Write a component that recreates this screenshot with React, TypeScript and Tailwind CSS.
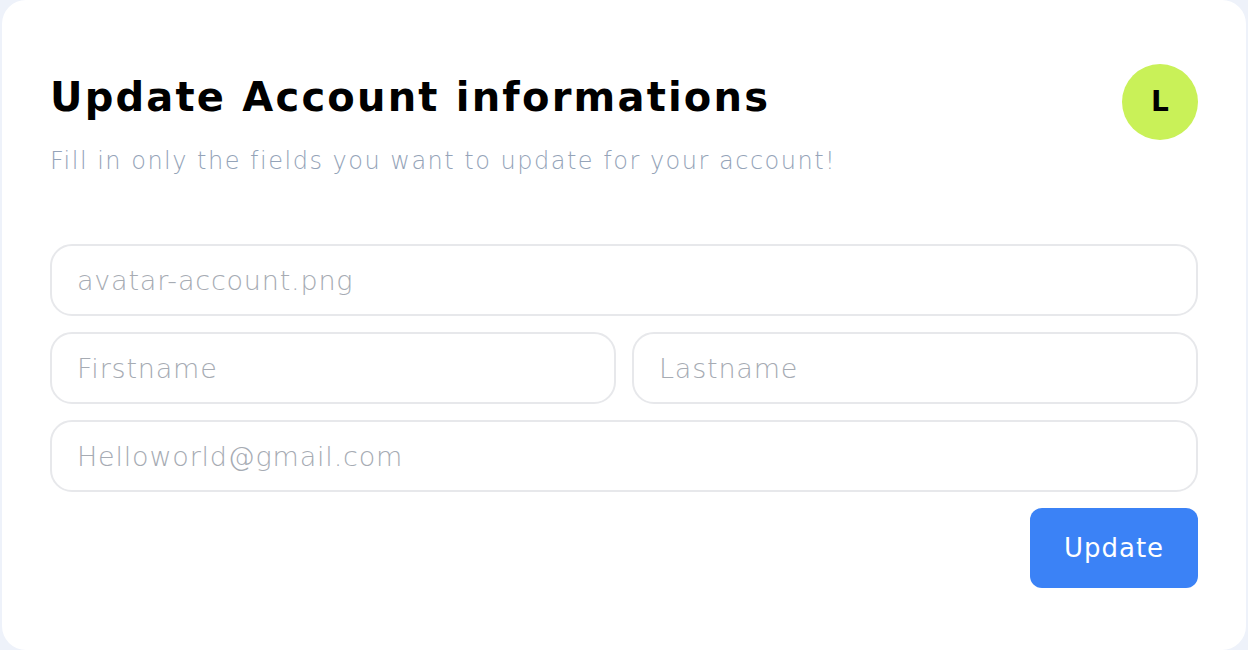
import React from "react";

export default function App() {
  const font = { fontFamily: '"DejaVu Sans", "Open Sans", sans-serif' };
  const inputCls =
    "h-[72px] rounded-[22px] border-2 border-[#e7e8eb] px-[25px] text-[27px] font-light tracking-[0.8px] text-gray-700 outline-none placeholder:text-[#a6abb3]";
  return (
    <div className="min-h-[650px] w-full bg-[#eef2fa] px-[2px]" style={font}>
      <div className="flex h-[650px] flex-col rounded-[24px] bg-white px-[48px] pt-[64px]">
        <div className="flex items-start justify-between">
          <div className="flex flex-col pt-[7px]">
            <h1 className="text-[40px] font-bold leading-[52px] tracking-[2.2px] text-black">
              Update Account informations
            </h1>
            <p className="mt-[22px] text-[24px] font-light leading-[32px] tracking-[1.5px] text-[#94a3b8]">
              Fill in only the fields you want to update for your account!
            </p>
          </div>
          <div className="flex h-[76px] w-[76px] items-center justify-center rounded-full bg-[#c9f158] text-[28px] font-bold text-black">
            L
          </div>
        </div>

        <div className="mt-[67px] flex flex-col gap-[16px]">
          <input className={`${inputCls} w-full`} placeholder="avatar-account.png" />
          <div className="flex gap-[16px]">
            <input className={`${inputCls} min-w-0 flex-1`} placeholder="Firstname" />
            <input className={`${inputCls} min-w-0 flex-1`} placeholder="Lastname" />
          </div>
          <input className={`${inputCls} w-full`} placeholder="Helloworld@gmail.com" />
          <div className="flex justify-end">
            <button className="h-[80px] w-[168px] rounded-[12px] bg-[#3b82f6] text-[26px] font-medium tracking-[1px] text-white">
              Update
            </button>
          </div>
        </div>
      </div>
    </div>
  );
}
